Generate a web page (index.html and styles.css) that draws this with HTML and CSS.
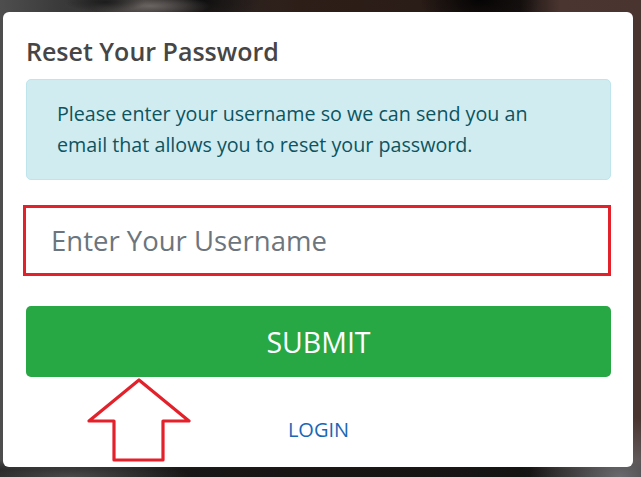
FILE: index.html
```html
<!DOCTYPE html>
<html lang="en">
<head>
<meta charset="utf-8">
<title>Reset Your Password</title>
<link rel="stylesheet" href="styles.css">
</head>
<body>
<div class="backdrop">
  <div class="card">
    <h1 class="title">Reset Your Password</h1>
    <div class="alert">Please enter your username so we can send you an email that allows you to reset your password.</div>
    <input class="field" type="text" placeholder="Enter Your Username">
    <button class="submit" type="button">SUBMIT</button>
    <a class="login" href="#">LOGIN</a>
    <svg class="arrow" width="110" height="90" viewBox="0 0 110 90" aria-hidden="true">
      <polygon points="54,2 104,43 78,43 78,82 29,82 29,43 4,43" fill="none" stroke="#e3212b" stroke-width="3.2" stroke-linejoin="round"/>
    </svg>
  </div>
</div>
</body>
</html>
```

FILE: styles.css
```css
html, body {
  margin: 0;
  padding: 0;
}

body {
  width: 641px;
  height: 477px;
  overflow: hidden;
  font-family: "Open Sans", "Noto Sans", sans-serif;
}

.backdrop {
  width: 641px;
  height: 477px;
  padding-top: 12px;
  box-sizing: border-box;
  background:
    radial-gradient(ellipse 40px 10px at 105px 2px, #1c1c1c 0%, rgba(28,28,28,0) 100%),
    radial-gradient(ellipse 60px 12px at 150px 6px, #6a6462 0%, rgba(106,100,98,0) 100%),
    radial-gradient(ellipse 60px 30px at 200px 0px, #0e0e0e 0%, rgba(14,14,14,0) 100%),
    radial-gradient(ellipse 60px 30px at 480px 0px, #050404 0%, rgba(5,4,4,0) 100%),
    radial-gradient(ellipse 90px 60px at 620px 477px, #6a6a6e 0%, rgba(106,106,110,0) 100%),
    radial-gradient(ellipse 120px 20px at 70px 477px, #4a4a4a 0%, rgba(74,74,74,0) 100%),
    linear-gradient(180deg, rgba(0,0,0,0) 0px, rgba(0,0,0,0) 460px, rgba(20,20,20,0.85) 470px),
    linear-gradient(90deg, #4e4e4e 0px, #3a3a3a 60px, #2c2624 200px, #2e1e18 300px, #2a1c17 420px, #1a1412 520px, #4a3530 560px, #4a3430 641px);
}

.card {
  position: relative;
  width: 630px;
  height: 455px;
  margin-left: 3px;
  box-sizing: border-box;
  padding: 22px 22px 0 20px;
  background: #ffffff;
  border-radius: 6px;
  display: flex;
  flex-direction: column;
}

.title {
  margin: 0 0 0 3px;
  font-size: 25px;
  line-height: 34px;
  font-weight: 600;
  color: #464646;
}

.alert {
  margin-top: 11px;
  margin-left: 3px;
  padding: 18px 70px 19px 30px;
  background: #d1ecf1;
  border: 1px solid #bee5eb;
  border-radius: 5px;
  color: #0c5460;
  font-size: 19.7px;
  line-height: 31px;
}

.field {
  margin-top: 25px;
  height: 71px;
  box-sizing: border-box;
  border: 3px solid #e3212b;
  border-radius: 0;
  padding: 0 0 0 25px;
  font-family: inherit;
  font-size: 27.5px;
  color: #495057;
  background: #fff;
  outline: none;
}

.field::placeholder {
  color: #6c757d;
}

.submit {
  margin-top: 30px;
  margin-left: 3px;
  height: 71px;
  border: 0;
  border-radius: 5px;
  background: #28a745;
  color: #ffffff;
  font-family: inherit;
  font-size: 28.5px;
  padding: 0;
}

.login {
  margin-top: 38px;
  align-self: center;
  margin-left: 3px;
  font-size: 20px;
  line-height: 30px;
  color: #1967b5;
  text-decoration: none;
}

.arrow {
  position: absolute;
  left: 82px;
  top: 366px;
}
```
